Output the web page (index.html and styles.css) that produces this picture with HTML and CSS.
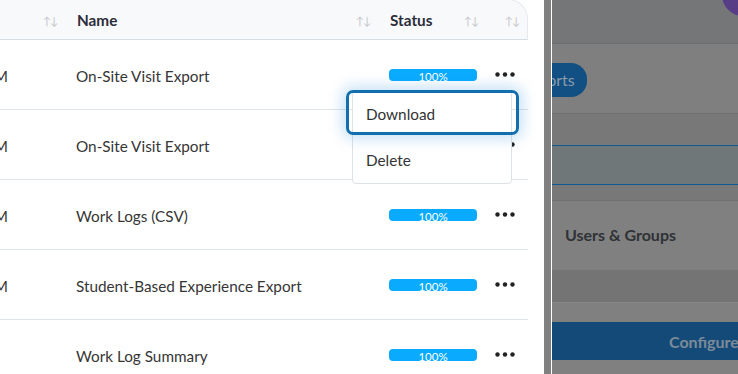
FILE: index.html
```html
<!DOCTYPE html>
<html lang="en">
<head>
    <meta charset="UTF-8">
    <meta name="viewport" content="width=device-width, initial-scale=1.0">
    <title>Exports</title>
    <link rel="stylesheet" href="styles.css">
</head>
<body>
    <div class="screen">
        <div class="panel">
            <div class="table">
                <div class="row head">
                    <div class="cell date"><span class="sort">↑↓</span></div>
                    <div class="cell name">Name <span class="sort">↑↓</span></div>
                    <div class="cell status">Status <span class="sort">↑↓</span></div>
                    <div class="cell actions"><span class="sort">↑↓</span></div>
                </div>
                <div class="row">
                    <div class="cell date">06/12/2024 10:41 AM</div>
                    <div class="cell name">On-Site Visit Export</div>
                    <div class="cell status"><div class="progress">100%</div></div>
                    <div class="cell actions">
                        <svg class="dots" width="20" height="5" viewBox="0 0 20 5"><circle cx="2.5" cy="2.5" r="2.2"/><circle cx="10" cy="2.5" r="2.2"/><circle cx="17.5" cy="2.5" r="2.2"/></svg>
                        <div class="menu">
                            <button class="menu-item focused">Download</button>
                            <button class="menu-item">Delete</button>
                        </div>
                    </div>
                </div>
                <div class="row">
                    <div class="cell date">06/12/2024 10:38 AM</div>
                    <div class="cell name">On-Site Visit Export</div>
                    <div class="cell status"><div class="progress">100%</div></div>
                    <div class="cell actions">
                        <svg class="dots" width="20" height="5" viewBox="0 0 20 5"><circle cx="2.5" cy="2.5" r="2.2"/><circle cx="10" cy="2.5" r="2.2"/><circle cx="17.5" cy="2.5" r="2.2"/></svg>
                    </div>
                </div>
                <div class="row">
                    <div class="cell date">06/11/2024 03:12 PM</div>
                    <div class="cell name">Work Logs (CSV)</div>
                    <div class="cell status"><div class="progress">100%</div></div>
                    <div class="cell actions">
                        <svg class="dots" width="20" height="5" viewBox="0 0 20 5"><circle cx="2.5" cy="2.5" r="2.2"/><circle cx="10" cy="2.5" r="2.2"/><circle cx="17.5" cy="2.5" r="2.2"/></svg>
                    </div>
                </div>
                <div class="row">
                    <div class="cell date">06/11/2024 02:57 PM</div>
                    <div class="cell name">Student-Based Experience Export</div>
                    <div class="cell status"><div class="progress">100%</div></div>
                    <div class="cell actions">
                        <svg class="dots" width="20" height="5" viewBox="0 0 20 5"><circle cx="2.5" cy="2.5" r="2.2"/><circle cx="10" cy="2.5" r="2.2"/><circle cx="17.5" cy="2.5" r="2.2"/></svg>
                    </div>
                </div>
                <div class="row">
                    <div class="cell date"></div>
                    <div class="cell name">Work Log Summary</div>
                    <div class="cell status"><div class="progress">100%</div></div>
                    <div class="cell actions">
                        <svg class="dots" width="20" height="5" viewBox="0 0 20 5"><circle cx="2.5" cy="2.5" r="2.2"/><circle cx="10" cy="2.5" r="2.2"/><circle cx="17.5" cy="2.5" r="2.2"/></svg>
                    </div>
                </div>
            </div>
        </div>
        <div class="divider"></div>
        <div class="page">
            <div class="page-top"><span class="avatar"></span></div>
            <div class="page-tabs"><span class="pill">Exports</span></div>
            <div class="page-gap"></div>
            <div class="page-search"></div>
            <div class="page-gap small"></div>
            <div class="page-card">Users &amp; Groups</div>
            <div class="page-strip"></div>
            <div class="page-gap mid"></div>
            <div class="page-button">Configure</div>
        </div>
    </div>
</body>
</html>
```

FILE: styles.css
```css
body {
    margin: 0;
    font-family: Lato, 'Noto Sans', sans-serif;
    background: #808080;
    overflow: hidden;
}
.screen {
    display: flex;
    height: 374px;
}
.panel {
    width: 528px;
    padding-right: 16px;
    background: #fff;
    flex-shrink: 0;
    overflow: hidden;
}
.table {
    margin-left: -100px;
    margin-top: -1px;
}
.row {
    display: grid;
    grid-template-columns: 160px 313px 108px 47px;
    height: 69px;
    align-items: center;
    border-bottom: 1px solid #dfe4e8;
    color: #363636;
    font-size: 15.3px;
}
.row.head {
    height: 39px;
    background: #f8f9fa;
    border: 1px solid #e6eaed;
    border-bottom-color: #d6dee3;
    border-top-right-radius: 20px;
    font-weight: bold;
    color: #2b2d3a;
}
.cell {
    position: relative;
    display: flex;
    align-items: center;
    height: 100%;
    box-sizing: border-box;
    padding-top: 2px;
}
.head .cell {
    padding-top: 1px;
}
.cell.date {
    justify-content: flex-end;
    padding-right: 52px;
    white-space: nowrap;
}
.head .cell.date {
    padding-right: 4px;
}
.cell.name, .cell.status {
    padding-left: 16px;
}
.sort {
    position: absolute;
    right: 4px;
    font-size: 11px;
    font-weight: normal;
    color: #c3c7cc;
    letter-spacing: -1px;
}
.head .cell.date .sort {
    position: static;
}
.progress {
    width: 88px;
    height: 12px;
    margin-top: -1px;
    border-radius: 4px;
    background: #0aabff;
    color: #fff;
    font-size: 11.5px;
    line-height: 16px;
    text-align: center;
    overflow: hidden;
}
.dots {
    margin-left: 14px;
    margin-top: -3px;
    fill: #222;
}
.actions .sort {
    right: 10px;
}
.menu {
    position: absolute;
    top: 50px;
    left: -129px;
    width: 158px;
    background: #fff;
    border: 1px solid #dde2e6;
    border-radius: 4px;
    z-index: 5;
}
.menu-item {
    position: relative;
    display: block;
    width: 100%;
    height: 46px;
    padding: 0 0 0 13px;
    border: none;
    background: none;
    font: inherit;
    color: #333;
    text-align: left;
}
.menu-item.focused::after {
    content: '';
    position: absolute;
    top: -1px;
    left: -7px;
    right: -8px;
    bottom: 2px;
    border: 3px solid #126fae;
    border-radius: 7px;
    box-shadow: 0 0 14px 4px rgba(40, 140, 220, 0.25);
}
.divider {
    width: 7px;
    border-right: 1px solid #fff;
    flex-shrink: 0;
}
.page {
    flex: 1;
    position: relative;
    overflow: hidden;
    background: #808080;
}
.page-top {
    height: 43px;
    background: #757677;
    border-bottom: 1px solid #6e6e6e;
}
.avatar {
    position: absolute;
    top: -26px;
    left: 170px;
    width: 42px;
    height: 42px;
    border-radius: 50%;
    background: #573d86;
}
.page-tabs {
    height: 69px;
    background: #7f7f7f;
    border-bottom: 1px solid #707070;
    display: flex;
    align-items: center;
}
.pill {
    margin-left: -51px;
    margin-top: 2px;
    padding: 7px 12px 8px 20px;
    background: #124f82;
    color: #8b9cab;
    border-radius: 16px;
    font-size: 16px;
}
.page-gap {
    height: 31px;
    background: #787878;
}
.page-gap.small {
    height: 15px;
    border-bottom: 1px solid #717171;
}
.page-gap.mid {
    height: 19px;
    background: #808080;
    border-top: 1px solid #888;
}
.page-search {
    height: 38px;
    background: #6f7779;
    border-top: 1px solid #0f5a8f;
    border-bottom: 1px solid #0f5a8f;
}
.page-card {
    height: 69px;
    padding-left: 13px;
    padding-bottom: 2px;
    box-sizing: border-box;
    display: flex;
    align-items: center;
    font-size: 16px;
    font-weight: bold;
    color: #2f3236;
    background: #808080;
}
.page-strip {
    height: 32px;
    background: #747474;
}
.page-button {
    height: 38px;
    background: #134a78;
    color: #7c8b99;
    font-weight: bold;
    font-size: 16px;
    display: flex;
    align-items: center;
    padding-left: 117px;
    white-space: nowrap;
}
```
